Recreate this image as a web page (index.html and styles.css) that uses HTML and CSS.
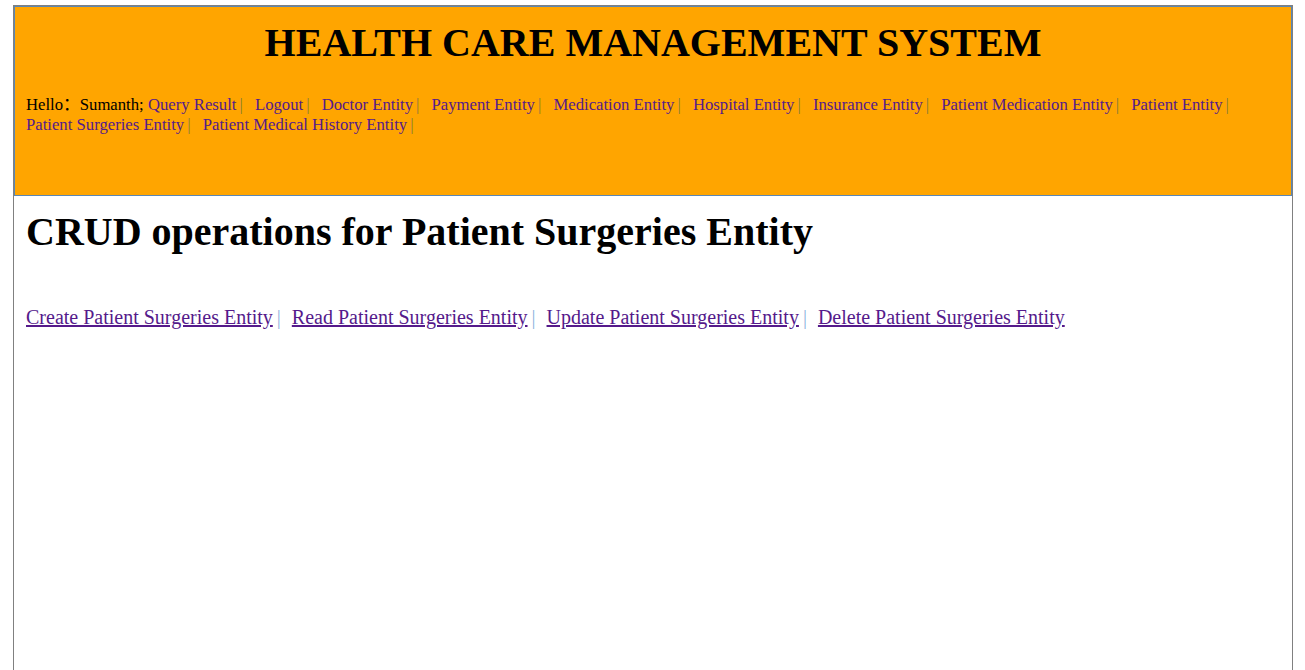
FILE: index.html
```html
<!DOCTYPE html>
<html>
<head>
<meta charset="utf-8">
<title>Health Care Management System</title>
<link rel="stylesheet" href="styles.css">
</head>
<body>
<div class="page">
  <div class="header">
    <h1 class="title">HEALTH CARE MANAGEMENT SYSTEM</h1>
    <div class="nav">
      <span class="greet">Hello<span class="colon">：</span></span><span class="user">Sumanth;</span>
      <a href="#">Query Result</a><span class="sep">|</span>
      <a href="#">Logout</a><span class="sep">|</span>
      <a href="#">Doctor Entity</a><span class="sep">|</span>
      <a href="#">Payment Entity</a><span class="sep">|</span>
      <a href="#">Medication Entity</a><span class="sep">|</span>
      <a href="#">Hospital Entity</a><span class="sep">|</span>
      <a href="#">Insurance Entity</a><span class="sep">|</span>
      <a href="#">Patient Medication Entity</a><span class="sep">|</span>
      <a href="#">Patient Entity</a><span class="sep">|</span>
      <a href="#">Patient Surgeries Entity</a><span class="sep">|</span>
      <a href="#">Patient Medical History Entity</a><span class="sep">|</span>
    </div>
  </div>
  <div class="content">
    <h2 class="heading">CRUD operations for Patient Surgeries Entity</h2>
    <div class="crud">
      <a href="#">Create Patient Surgeries Entity</a><span class="sep">|</span>
      <a href="#">Read Patient Surgeries Entity</a><span class="sep">|</span>
      <a href="#">Update Patient Surgeries Entity</a><span class="sep">|</span>
      <a href="#">Delete Patient Surgeries Entity</a>
    </div>
  </div>
</div>
</body>
</html>
```
FILE: styles.css
```css
html, body {
  margin: 0;
  padding: 0;
  background: #fff;
  font-family: "Liberation Serif", "Times New Roman", serif;
  font-size: 16px;
  color: #000;
}
.page {
  width: 1278px;
  height: 665px;
  margin: 5px 0 0 13px;
  border: 1px solid #808080;
  border-bottom: none;
}
.header {
  background: #ffa500;
  border: 1px solid #5b87b4;
  height: 188px;
  padding: 0 11px;
}
.title {
  margin: 0;
  padding-top: 14px;
  text-align: center;
  font-size: 40px;
  font-weight: bold;
  line-height: 44px;
}
.nav {
  margin-top: 30px;
  font-size: 16.7px;
  line-height: 20px;
}
.colon {
  font-family: "Noto Sans CJK SC", sans-serif;
  line-height: 0;
}
.nav a {
  color: #551a8b;
  text-decoration: none;
}
.sep {
  color: #857c3e;
  margin: 0 8px 0 3px;
}
.content {
  padding: 0 12px;
}
.heading {
  margin: 0;
  padding-top: 14px;
  font-size: 40px;
  font-weight: bold;
  line-height: 44px;
}
.crud {
  margin-top: 52px;
  font-size: 20px;
  line-height: 22px;
}
.crud .sep {
  color: #8db4dd;
  margin: 0 6px 0 4px;
}
.crud a {
  color: #551a8b;
  text-decoration: underline;
}
```
